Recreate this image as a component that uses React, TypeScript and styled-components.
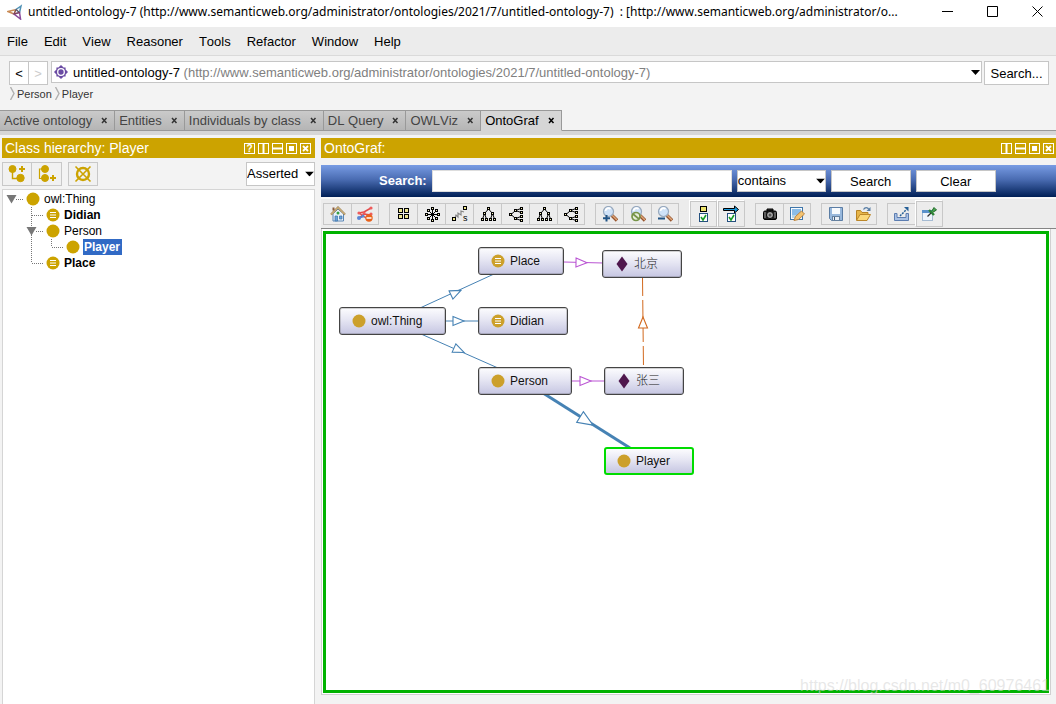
import React from "react";
import styled, { createGlobalStyle, css } from "styled-components";

const gold = "#cca300";

const GlobalStyle = createGlobalStyle`
  *, *::before, *::after { box-sizing: border-box; }
  body {
    margin: 0;
    background: #f3f3f3;
    color: #000;
    font: 13px/16px "Liberation Sans", "Noto Sans CJK SC", sans-serif;
    font-kerning: none;
  }
  button, input, select {
    font: inherit;
    font-kerning: none;
    color: inherit;
    margin: 0;
    padding: 0;
    border-radius: 0;
  }
  svg { display: block; flex: none; }
`;

/* ---------- window frame ---------- */

const Window = styled.div`
  min-height: 100vh;
  display: flex;
  flex-direction: column;
`;

const TitleBar = styled.header`
  height: 27px;
  display: flex;
  align-items: center;
  background: #fff;
  padding-left: 7px;
  padding-bottom: 4px;
`;

const Title = styled.h1`
  flex: 1;
  min-width: 0;
  margin: 0 0 0 5px;
  overflow: hidden;
  white-space: pre;
  font: 12px/20px "Noto Sans", "Noto Sans CJK SC", sans-serif;
  font-kerning: none;
`;

const WindowButton = styled.button`
  width: 45px;
  height: 23px;
  display: grid;
  align-items: center;
  justify-items: end;
  padding-right: 13px;
  border: 0;
  background: none;
`;

const MenuBar = styled.nav`
  height: 29px;
  display: flex;
  align-items: center;
  gap: 16px;
  padding: 2px 7px 0;
  background: #ececec;
  border-bottom: 1px solid #dadada;
`;

const MenuButton = styled.button`
  border: 0;
  background: none;
`;

/* ---------- location bar ---------- */

const LocationBar = styled.div`
  display: flex;
  align-items: flex-start;
  padding: 5px 7px 0 9px;
`;

const NavButton = styled.button`
  width: 20px;
  height: 24px;
  padding-top: 2px;
  border: 1px solid #c6c6c6;
  background: #fff;
  & + & { margin-left: -1px; }
  &:disabled { color: #ccc; }
`;

const OntologyBox = styled.div`
  position: relative;
  flex: 1;
  min-width: 0;
  height: 22px;
  margin: 0 2px 0 3px;
  padding: 0 1px 0 2px;
  display: flex;
  align-items: center;
  background: #fff;
  border: 1px solid #c6c6c6;
  white-space: nowrap;
`;

const OntologyName = styled.span`
  flex: 1;
  margin-left: 5px;
  padding-top: 2px;
`;

const OntologyIri = styled.span`
  color: #808080;
`;

const HiddenSelect = styled.select`
  position: absolute;
  inset: 0;
  width: 100%;
  opacity: 0;
`;

const FindButton = styled.button`
  width: 65px;
  height: 24px;
  padding-top: 2px;
  border: 1px solid #c6c6c6;
  background: #fff;
`;

const Breadcrumbs = styled.nav`
  display: flex;
  height: 17px;
  align-items: center;
  gap: 3px;
  padding-left: 10px;
  font-size: 11px;
`;

const Crumb = styled.a`
  display: flex;
  align-items: center;
  gap: 2px;
  color: #333;
  text-decoration: none;
`;

/* ---------- tabs ---------- */

const TabStrip = styled.div`
  display: flex;
  height: 25px;
  margin-top: 8px;
  border-bottom: 4px solid #d6d6d6;
`;

const TabFiller = styled.div`
  flex: 1;
  border-bottom: 1px solid #999;
`;

const Tab = styled.button<{ $active?: boolean }>`
  display: flex;
  align-items: center;
  gap: 8px;
  height: 21px;
  padding: 0 5px 0 4px;
  border: solid #999;
  border-width: 1px 1px 1px 0;
  color: #444;
  background: linear-gradient(#cacaca, #b5b5b5);
  white-space: nowrap;
  ${(p) =>
    p.$active &&
    css`
      color: #000;
      background: #d6d6d6;
      border-bottom-color: #d6d6d6;
    `}
`;

/* ---------- panels ---------- */

const Workspace = styled.main`
  flex: 1;
  display: grid;
  grid-template-columns: 313px minmax(0, 1fr);
  column-gap: 6px;
  padding: 3px 0 0 2px;
`;

const Panel = styled.section`
  display: flex;
  flex-direction: column;
  min-width: 0;
`;

const PanelHeader = styled.div<{ $end: number }>`
  height: 20px;
  display: flex;
  align-items: center;
  gap: 3px;
  padding: 0 ${(p) => p.$end}px 0 3px;
  background: ${gold};
  color: #fff;
`;

const PanelTitle = styled.h2`
  flex: 1;
  margin: 0;
  font-size: 14px;
  line-height: 20px;
  font-weight: 400;
`;

const HeaderButton = styled.button`
  width: 11px;
  height: 11px;
  display: grid;
  place-items: center;
  border: 1px solid #fff;
  background: none;
  font-size: 10px;
  line-height: 9px;
  font-weight: 700;
`;

const TreeToolbar = styled.div`
  display: flex;
  height: 24px;
  margin: 4px 0 3px;
`;

const TreeTool = styled.button`
  width: 30px;
  height: 24px;
  display: grid;
  place-items: center;
  border: 1px solid #c8c8c8;
  background: #f1f1f1;
  & + & { border-left: 0; }
  &:nth-child(3) {
    margin-left: 6px;
    border-left: 1px solid #c8c8c8;
  }
`;

const SelectFrame = styled.div<{ $width: number; $height: number }>`
  position: relative;
  width: ${(p) => p.$width}px;
  height: ${(p) => p.$height}px;
  select {
    width: 100%;
    height: 100%;
    padding-left: 0;
    appearance: none;
    background: #fff;
    border: 1px solid #c6c6c6;
  }
  svg {
    position: absolute;
    right: 1px;
    top: 50%;
    transform: translateY(-50%);
    pointer-events: none;
  }
`;

const Pusher = styled.div`
  flex: 1;
`;

const Tree = styled.div`
  flex: 1;
  padding-top: 1px;
  background: #fff;
  border: 1px solid #d5d5d5;
  border-bottom: 0;
  font-size: 12px;
`;

const TreeRow = styled.div`
  display: flex;
  height: 16px;
  align-items: center;
`;

const TreeLabel = styled.span<{ $bold?: boolean; $selected?: boolean }>`
  line-height: 16px;
  padding: 0 2px 0 1px;
  font-weight: ${(p) => (p.$bold ? 700 : 400)};
  color: ${(p) => (p.$selected ? "#fff" : "#000")};
  background: ${(p) => (p.$selected ? "#316ac5" : "transparent")};
`;

/* ---------- graph panel ---------- */

const SearchBand = styled.form`
  display: flex;
  align-items: center;
  gap: 5px;
  height: 32px;
  margin-top: 7px;
  padding-left: 58px;
  background: linear-gradient(#789ce4, #4a6cb2 45%, #001f56);
`;

const SearchLabel = styled.label`
  color: #fff;
  font-weight: 700;
`;

const SearchInput = styled.input`
  width: 300px;
  height: 22px;
  border: 1px solid #ddd;
  background: #fff;
`;

const BandButton = styled.button`
  width: 80px;
  height: 22px;
  padding-top: 1px;
  border: 1px solid #c6c6c6;
  background: #fff;
`;

const GraphToolbar = styled.div`
  display: flex;
  align-items: center;
  gap: 10px;
  height: 32px;
  padding: 0 2px;
  background: #ececec;
  border-top: 2px solid #f8f8f8;
  border-bottom: 1px solid #858585;
`;

const ToolGroup = styled.div`
  display: flex;
  align-items: center;
`;

const ToolButton = styled.button<{ $raised?: boolean }>`
  width: 28px;
  height: 22px;
  display: grid;
  place-items: center;
  background: #ececec;
  border: 1px solid #c8c8c8;
  border-right-width: 0;
  &:last-child { border-right-width: 1px; }
  ${(p) =>
    p.$raised &&
    css`
      height: 27px;
      border: 1px solid #c8c8c8;
      border-left-color: #fff;
      border-top-color: #fff;
      box-shadow: inset 1px 1px #c8c8c8;
    `}
`;

const GraphFrame = styled.div`
  flex: 1;
  display: flex;
  margin: 0 5px 9px 0;
  padding: 2px 1px 1px;
  background: #fff;
  border: 1px solid #d0d0d0;
  border-top: 0;
`;

const Canvas = styled.div`
  position: relative;
  flex: 1;
  min-height: 300px;
  background: #fff;
  border: 3px solid #00b200;
`;

const EdgeLayer = styled.svg`
  position: absolute;
  left: 0;
  top: 0;
  width: 100%;
  height: 100%;
`;

const Node = styled.div<{ $x: number; $y: number; $w: number; $selected?: boolean }>`
  position: absolute;
  left: ${(p) => p.$x}px;
  top: ${(p) => p.$y}px;
  width: ${(p) => p.$w}px;
  height: 28px;
  display: flex;
  align-items: center;
  gap: 5px;
  padding-left: ${(p) => (p.$selected ? 11 : 12)}px;
  font-size: 12px;
  color: #111;
  border: ${(p) => (p.$selected ? "2px solid #00dc00" : "1px solid #444")};
  border-radius: 3px;
  background: linear-gradient(#fcfcfe, #e6e6f3 45%, #c6c6e2);
  box-shadow: ${(p) => (p.$selected ? "none" : "inset 0 0 0 1px rgba(80, 80, 80, 0.25)")};
  &:lang(zh) {
    color: #222;
    font-weight: 300;
  }
`;

const Watermark = styled.span`
  position: absolute;
  right: -4px;
  bottom: -6px;
  font-size: 16px;
  line-height: 20px;
  color: rgba(215, 215, 215, 0.6);
  white-space: nowrap;
`;

/* ---------- drawings ---------- */

const Arrow = () => (
  <svg width="9" height="5" viewBox="0 0 9 5"><path d="M0 0h9L4.500 5z" /></svg>
);

const TabClose = ({ active }: { active?: boolean }) => (
  <svg width="9" height="9" viewBox="0 0 9 9">
    <path d="M2 2l4.500 5M6.500 2L2 7" stroke={active ? "#000" : "#333"} strokeWidth="1.500" />
  </svg>
);

const Icon = ({ children, size = 16 }: { children: React.ReactNode; size?: number }) => (
  <svg width={size} height={size} viewBox={`0 0 ${size} ${size}`} fill="none">{children}</svg>
);

const AppLogo = () => (
  <svg width="16" height="16" viewBox="0 0 16 16" fill="none">
    <path d="M1 7.500L9 5.500L7 10z" stroke="#c98b56" strokeWidth="1.500" />
    <path d="M14 2L9 5.500L12.500 8.500z" stroke="#4f91b5" strokeWidth="1.500" />
    <path d="M7 10l5.500-1.500L13.500 15z" stroke="#8a4a9b" strokeWidth="1.500" />
    <path d="M9 5.500L12.500 8.500L7 10z" stroke="#7a4750" />
  </svg>
);

const OntologyIcon = () => (
  <svg width="14" height="14" viewBox="0 0 14 14">
    <path d="M7 0l2.600 2.400h2v2L14 7l-2.400 2.600v2h-2L7 14l-2.600-2.400h-2v-2L0 7l2.400-2.600v-2h2z" fill="#6a4ba3" />
    <circle cx="7" cy="7" r="3.300" fill="#6a4ba3" stroke="#fff" strokeWidth="1.300" />
  </svg>
);

const ClassDot = ({ defined, color = gold }: { defined?: boolean; color?: string }) => (
  <svg width="14" height="14" viewBox="0 0 14 14">
    <circle cx="7" cy="7" r="6.500" fill={color} />
    {defined && <path d="M4 4.500h6M4 7h6M4 9.500h6" stroke="#fff" />}
  </svg>
);

const Diamond = () => (
  <svg width="14" height="16" viewBox="0 0 14 16"><path d="M7 .5L12.500 8L7 15.500L1.500 8z" fill="#4f174d" /></svg>
);

type CellKind = "blank" | "line" | "tee" | "elbow" | "root" | "open";

const GuideCell = ({ kind }: { kind: CellKind }) => (
  <svg width="20" height="16" viewBox="0 0 20 16">
    <g stroke="#777" strokeDasharray="1 1" shapeRendering="crispEdges">
      {(kind === "line" || kind === "tee" || kind === "open") && <path d="M8.500 0V16" />}
      {kind === "elbow" && <path d="M8.500 0V8" />}
      {(kind === "tee" || kind === "elbow") && <path d="M9 8.500H20" />}
      {(kind === "root" || kind === "open") && <path d="M13 8.500H20" />}
    </g>
    {(kind === "root" || kind === "open") && <path d="M3.500 4h10L8.500 12.500z" fill="#777" />}
  </svg>
);

const IconSlot = styled.span`
  width: 20px;
  display: flex;
  justify-content: center;
`;

const Mini = ({ at }: { at: number[][] }) => (
  <>
    {at.map(([x, y]) => (
      <rect key={`${x}-${y}`} x={x - 1} y={y - 1} width="2" height="2" fill="#f3ecb0" stroke="#000" />
    ))}
  </>
);

const Home = () => (
  <Icon>
    <path d="M3 7.500V15h10.500V7.500L8 3z" fill="#eaf2fb" stroke="#5a86b5" />
    <path d="M1 8.500L8 1.500l7 7" stroke="#9b7a48" strokeWidth="2" />
    <path d="M1 8.500L8 1.500l7 7" stroke="#ead6a0" strokeWidth="1" />
    <path d="M3.500 1.500v3" stroke="#8a5a3a" strokeWidth="2" />
    <path d="M5 10h2.500v5H5zM9.500 10H12v3H9.500z" fill="#6aa4da" stroke="#3c73a8" strokeWidth=".7" />
    <circle cx="8" cy="7" r="1.500" fill="#35a043" />
  </Icon>
);

const ClearGraph = () => (
  <Icon>
    <path d="M2 7l5-1 7-4M2 12l5-4 7 1M2 7l7 5" stroke="#e34a4a" strokeWidth="1.500" />
    <path d="M2 12l5-2" stroke="#4d75c4" strokeWidth="1.500" />
    {[[2, 7], [7, 7], [14, 2], [14, 8]].map(([x, y]) => <circle key={`${x}${y}`} cx={x} cy={y} r="1.600" fill="#ee5b5b" />)}
    <circle cx="2" cy="12" r="2" fill="#5b86d4" />
    <circle cx="6" cy="10" r="1.500" fill="#5b86d4" />
    <circle cx="12" cy="12" r="3.700" fill="#e8621b" />
    <path d="M9.500 12h5" stroke="#fff" strokeWidth="1.500" />
  </Icon>
);

const GridLayout = () => (
  <Icon>
    {[[2, 2], [8, 2], [2, 8], [8, 8]].map(([x, y]) => (
      <rect key={`${x}${y}`} x={x + 0.5} y={y + 0.5} width="4" height="4" fill="#ece58f" stroke="#000" />
    ))}
  </Icon>
);

const RadialLayout = () => (
  <Icon>
    <path d="M8.500 2v13M2 8.500h13M4 4l9 9M13 4l-9 9" stroke="#000" />
    <Mini at={[[8.5, 2.5], [8.5, 14.5], [2.5, 8.5], [14.5, 8.5], [4.5, 4.5], [12.5, 4.5], [4.5, 12.5], [12.5, 12.5]]} />
  </Icon>
);

const SpringLayout = () => (
  <svg width="18" height="16" viewBox="0 0 18 16" fill="none">
    <path d="M4 12l1-3 2 2 0-4 3 2 0-4 3 1" stroke="#888" strokeWidth="1.200" />
    <rect x="1.500" y="11.500" width="3" height="3" fill="#ece58f" stroke="#000" />
    <rect x="12.500" y=".5" width="3" height="3" fill="#ece58f" stroke="#000" />
    <text x="12" y="15" fontSize="9" fill="#000">s</text>
  </svg>
);

const TreeLayout = ({ sideways }: { sideways?: boolean }) => (
  <Icon>
    <g transform={sideways ? "matrix(0 1 1 0 0 0)" : undefined}>
      <path d="M8.500 3L4.500 7.500L2.500 13M8.500 3l4 4.500l2 5.500M4.500 7.500l2 5.500M12.500 7.500l-2 5.500" stroke="#000" />
      <Mini at={[[8.5, 2.5], [4.5, 7.5], [12.5, 7.5], [2.5, 13.5], [6.5, 13.5], [10.5, 13.5], [14.5, 13.5]]} />
    </g>
  </Icon>
);

const Magnifier = ({ mark }: { mark: "in" | "reset" | "out" }) => (
  <Icon>
    <path d="M10 9.500l5 5" stroke="#94542e" strokeWidth="3.400" />
    <path d="M10 9l5 5" stroke="#dda478" strokeWidth="1.500" />
    <circle cx="6.500" cy="5.500" r="5" fill="#cfe2f8" stroke="#98a9bd" strokeWidth="1.200" />
    <path d="M3.500 5a3 3 0 0 1 5-2" stroke="#fff" strokeWidth="1.800" />
    {mark === "in" && <path d="M4.500 9v6.500M1 12.200h7" stroke="#215486" strokeWidth="2" />}
    {mark === "out" && <path d="M1 12.500h7" stroke="#215486" strokeWidth="2" />}
    {mark === "reset" && (
      <g stroke="#769448" strokeWidth="1.700"><circle cx="6" cy="10.500" r="4" fill="#e6eddb" /><path d="M3 8l6 5" /></g>
    )}
  </Icon>
);

const TypesToggle = ({ arrow }: { arrow?: boolean }) => (
  <svg width="18" height="18" viewBox="0 0 18 18" fill="none">
    {arrow ? (
      <path d="M1.500 3.500h11V1L16.500 4.500l-4 3.500V5.500h-11z" fill="#1999dc" stroke="#000" />
    ) : (
      <rect x="6.500" y="1.500" width="6" height="5" fill="#ece36d" stroke="#000" />
    )}
    <rect x="5.500" y="8.500" width="8" height="8" fill="#fff" stroke="#24507f" />
    <path d="M7 12l2 3 3-5" stroke="#169c26" strokeWidth="1.600" />
  </svg>
);

const Camera = () => (
  <Icon>
    <path d="M5 3h6v2H5z" fill="#333" stroke="#000" />
    <rect x="1.500" y="5" width="13" height="8.500" rx="1.500" fill="#222" stroke="#000" />
    <path d="M3 6v6M13 6v6" stroke="#999" />
    <circle cx="8" cy="9" r="3.500" fill="#aaa" stroke="#000" />
    <circle cx="8" cy="9" r="1.500" fill="#555" />
  </Icon>
);

const EditImage = () => (
  <Icon>
    <rect x="1.500" y="1.500" width="12" height="12" fill="#f7fbff" stroke="#3f76aa" />
    <path d="M3 3h9v6H3z" fill="#8bbde8" /><path d="M3 9h9v3H3z" fill="#b7d5e8" />
    <path d="M5 14.500l1.500-4L12.500 5l3 3-6 5.500z" fill="#f3c371" stroke="#bd8540" />
  </Icon>
);

const Save = () => (
  <Icon>
    <path d="M1.500 1.500h13v13h-11l-2-2z" fill="#98b8dc" stroke="#5b7da4" />
    <rect x="4" y="2" width="8" height="6" fill="#f7fafd" />
    <rect x="4.500" y="10.500" width="7" height="4" fill="#e8eef5" stroke="#66819f" />
    <path d="M6.500 11v3" stroke="#3f5b7b" />
  </Icon>
);

const OpenFolder = () => (
  <Icon>
    <path d="M1.500 14V4.500h4l1.500 2h6V9" fill="#e7b64a" stroke="#b78324" />
    <path d="M1.500 14.500L5 8.500h10.500l-3.500 6z" fill="#fbd879" stroke="#bc872a" />
    <path d="M8.500 3.500C10 1 12.500 1 14 3.500" stroke="#587ea5" strokeWidth="1.300" /><path d="M15.500 1v4h-4z" fill="#587ea5" />
  </Icon>
);

const Export = () => (
  <Icon>
    <path d="M.5 7.500H3v4h9v-4h2.500v7H.5z" fill="#a9c1e4" stroke="#5c7db0" />
    <path d="M6 10l6-6" stroke="#255f96" strokeWidth="1.500" strokeDasharray="2 1" /><path d="M10 1h4.500v4.500z" fill="#255f96" />
  </Icon>
);

const Pin = () => (
  <Icon>
    <rect x="1.500" y="4.500" width="10" height="10" fill="#eef5fc" stroke="#a5bbd2" />
    <path d="M1 4h11v3H1z" fill="#5a91cb" />
    <path d="M10.500 5.500l2.500-4 2.500 2.500-4 2.500z" fill="#4ba552" stroke="#206b2a" />
    <path d="M8 4l5 5" stroke="#2c8435" strokeWidth="2.400" />
    <path d="M10 7L6.500 10.500" stroke="#333" strokeWidth="1.200" />
  </Icon>
);

const AddSubclass = () => (
  <svg width="20" height="20" viewBox="0 0 20 20" fill="none" stroke={gold}>
    <path d="M5.500 6v8.500h5" strokeWidth="1.400" />
    <circle cx="5.500" cy="5" r="3.500" fill={gold} /><circle cx="13.500" cy="14" r="3.700" fill={gold} />
    <path d="M15 2v6M12 5h6" strokeWidth="2" />
  </svg>
);

const AddSibling = () => (
  <svg width="20" height="20" viewBox="0 0 20 20" fill="none" stroke={gold}>
    <path d="M6 5H2.500v9.500h4" strokeWidth="1.200" />
    <circle cx="8" cy="5" r="3.500" fill={gold} /><circle cx="8" cy="14" r="3.500" fill={gold} />
    <path d="M16 11v6M13 14h6" strokeWidth="2" />
  </svg>
);

const DeleteClass = () => (
  <svg width="18" height="18" viewBox="0 0 18 18" fill="none" stroke={gold} strokeWidth="1.600">
    <circle cx="9" cy="9" r="6" strokeWidth="2.400" /><path d="M1.500 1.500l15 15M16.500 1.500l-15 15" />
  </svg>
);

const PanelControls = () => (
  <>
    <HeaderButton aria-label="Split vertically"><svg width="9" height="9" viewBox="0 0 9 9"><path d="M3.500 0h2v9h-2z" fill="#fff" /></svg></HeaderButton>
    <HeaderButton aria-label="Split horizontally"><svg width="9" height="9" viewBox="0 0 9 9"><path d="M0 3.500h9v2H0z" fill="#fff" /></svg></HeaderButton>
    <HeaderButton aria-label="Float"><svg width="9" height="9" viewBox="0 0 9 9"><path d="M2 2h5v5H2z" fill="#fff" /></svg></HeaderButton>
    <HeaderButton aria-label="Close"><svg width="9" height="9" viewBox="0 0 9 9"><path d="M2 2l5 5M7 2L2 7" stroke="#fff" strokeWidth="1.800" /></svg></HeaderButton>
  </>
);

const ArrowHead = ({ x, y, angle, color, scale = 1 }: { x: number; y: number; angle: number; color: string; scale?: number }) => (
  <path
    d="M0 -4.500L11 0L0 4.500z"
    fill="#fff"
    stroke={color}
    strokeWidth={1.1 / scale}
    transform={`translate(${x} ${y}) rotate(${angle}) scale(${scale})`}
  />
);

/* ---------- data ---------- */

const tabs = ["Active ontology", "Entities", "Individuals by class", "DL Query", "OWLViz", "OntoGraf"];

const tree: { name: string; cells: CellKind[]; defined?: boolean; bold?: boolean; selected?: boolean }[] = [
  { name: "owl:Thing", cells: ["root"] },
  { name: "Didian", cells: ["blank", "tee"], defined: true, bold: true },
  { name: "Person", cells: ["blank", "open"] },
  { name: "Player", cells: ["blank", "line", "elbow"], bold: true, selected: true },
  { name: "Place", cells: ["blank", "elbow"], defined: true, bold: true },
];

const nodes: { name: string; x: number; y: number; w: number; kind: "class" | "defined" | "individual"; selected?: boolean }[] = [
  { name: "owl:Thing", x: 13, y: 73, w: 107, kind: "class" },
  { name: "Place", x: 152, y: 13, w: 86, kind: "defined" },
  { name: "Didian", x: 152, y: 73, w: 90, kind: "defined" },
  { name: "Person", x: 152, y: 133, w: 94, kind: "class" },
  { name: "北京", x: 276, y: 16, w: 80, kind: "individual" },
  { name: "张三", x: 278, y: 133, w: 80, kind: "individual" },
  { name: "Player", x: 278, y: 213, w: 90, kind: "class", selected: true },
];

const toolGroups: { label: string; icon: React.ReactNode; raised?: boolean }[][] = [
  [{ label: "Home", icon: <Home /> }, { label: "Clear graph", icon: <ClearGraph /> }],
  [
    { label: "Grid", icon: <GridLayout /> },
    { label: "Radial", icon: <RadialLayout /> },
    { label: "Spring", icon: <SpringLayout /> },
    { label: "Tree vertical", icon: <TreeLayout /> },
    { label: "Tree horizontal", icon: <TreeLayout sideways /> },
    { label: "Vertical directed", icon: <TreeLayout /> },
    { label: "Horizontal directed", icon: <TreeLayout sideways /> },
  ],
  [
    { label: "Zoom in", icon: <Magnifier mark="in" /> },
    { label: "No zoom", icon: <Magnifier mark="reset" /> },
    { label: "Zoom out", icon: <Magnifier mark="out" /> },
  ],
  [{ label: "Node types", icon: <TypesToggle />, raised: true }, { label: "Arc types", icon: <TypesToggle arrow />, raised: true }],
  [{ label: "Snapshot", icon: <Camera /> }, { label: "Configure tooltips", icon: <EditImage /> }],
  [{ label: "Save graph", icon: <Save /> }, { label: "Open graph", icon: <OpenFolder /> }],
  [{ label: "Export", icon: <Export /> }, { label: "Pin tooltips", icon: <Pin />, raised: true }],
];

export default function App() {
  return (
    <Window>
      <GlobalStyle />
      <TitleBar>
        <AppLogo />
        <Title>{"untitled-ontology-7 (http://www.semanticweb.org/administrator/ontologies/2021/7/untitled-ontology-7)  : [http://www.semanticweb.org/administrator/o..."}</Title>
        <WindowButton aria-label="Minimize"><svg width="11" height="11"><path d="M0 5.500h11" stroke="#000" /></svg></WindowButton>
        <WindowButton aria-label="Maximize"><svg width="11" height="11"><path d="M.5 .5h10v10H.5z" fill="none" stroke="#000" /></svg></WindowButton>
        <WindowButton aria-label="Close window"><svg width="11" height="11"><path d="M.5 .5l10 10M10.500 .5l-10 10" stroke="#000" /></svg></WindowButton>
      </TitleBar>
      <MenuBar>
        {["File", "Edit", "View", "Reasoner", "Tools", "Refactor", "Window", "Help"].map((m) => (
          <MenuButton key={m}>{m}</MenuButton>
        ))}
      </MenuBar>
      <LocationBar>
        <NavButton aria-label="Back">&lt;</NavButton>
        <NavButton aria-label="Forward" disabled>&gt;</NavButton>
        <OntologyBox>
          <OntologyIcon />
          <OntologyName>
            untitled-ontology-7 <OntologyIri>(http://www.semanticweb.org/administrator/ontologies/2021/7/untitled-ontology-7)</OntologyIri>
          </OntologyName>
          <Arrow />
          <HiddenSelect aria-label="Active ontology"><option>untitled-ontology-7</option></HiddenSelect>
        </OntologyBox>
        <FindButton>Search...</FindButton>
      </LocationBar>
      <Breadcrumbs>
        {["Person", "Player"].map((c) => (
          <Crumb key={c} href="#">
            <svg width="5" height="13"><path d="M.5 0l3.500 6.500L.5 13" fill="none" stroke="#b0b0b0" strokeWidth="1.400" /></svg>
            {c}
          </Crumb>
        ))}
      </Breadcrumbs>
      <TabStrip>
        {tabs.map((t) => (
          <Tab key={t} $active={t === "OntoGraf"}>{t}<TabClose active={t === "OntoGraf"} /></Tab>
        ))}
        <TabFiller />
      </TabStrip>
      <Workspace>
        <Panel>
          <PanelHeader $end={4}>
            <PanelTitle>Class hierarchy: Player</PanelTitle>
            <HeaderButton aria-label="Help">?</HeaderButton>
            <PanelControls />
          </PanelHeader>
          <TreeToolbar>
            <TreeTool aria-label="Add subclass"><AddSubclass /></TreeTool>
            <TreeTool aria-label="Add sibling class"><AddSibling /></TreeTool>
            <TreeTool aria-label="Delete class"><DeleteClass /></TreeTool>
            <Pusher />
            <SelectFrame $width={69} $height={24}>
              <select aria-label="Hierarchy"><option>Asserted</option></select>
              <Arrow />
            </SelectFrame>
          </TreeToolbar>
          <Tree role="tree">
            {tree.map((r) => (
              <TreeRow key={r.name} role="treeitem" aria-selected={!!r.selected}>
                {r.cells.map((c, i) => <GuideCell key={i} kind={c} />)}
                <IconSlot><ClassDot defined={r.defined} /></IconSlot>
                <TreeLabel $bold={r.bold} $selected={r.selected}>{r.name}</TreeLabel>
              </TreeRow>
            ))}
          </Tree>
        </Panel>
        <Panel>
          <PanelHeader $end={2}>
            <PanelTitle>OntoGraf:</PanelTitle>
            <PanelControls />
          </PanelHeader>
          <SearchBand onSubmit={(e) => e.preventDefault()}>
            <SearchLabel htmlFor="graph-search">Search:</SearchLabel>
            <SearchInput id="graph-search" type="text" />
            <SelectFrame $width={89} $height={22}>
              <select aria-label="Match mode"><option>contains</option></select>
              <Arrow />
            </SelectFrame>
            <BandButton type="submit">Search</BandButton>
            <BandButton type="reset">Clear</BandButton>
          </SearchBand>
          <GraphToolbar>
            {toolGroups.map((g, i) => (
              <ToolGroup key={i}>
                {g.map((t) => (
                  <ToolButton key={t.label} aria-label={t.label} $raised={t.raised}>{t.icon}</ToolButton>
                ))}
              </ToolGroup>
            ))}
          </GraphToolbar>
          <GraphFrame>
            <Canvas>
              <EdgeLayer fill="none">
                <g stroke="#4682b4">
                  <path d="M94 74L168 40M119 87H153M95 100L172 134" />
                  <path d="M217 159L304 214" strokeWidth="3" />
                </g>
                <path d="M238 28L277 29M246 147H279" stroke="#ba55d3" />
                <path d="M316.500 43L317.500 134" stroke="#d2691e" strokeDasharray="19 4" />
                <ArrowHead x={125} y={61} angle={-25} color="#4682b4" />
                <ArrowHead x={127} y={87} angle={0} color="#4682b4" />
                <ArrowHead x={128} y={114} angle={24} color="#4682b4" />
                <ArrowHead x={254} y={183} angle={32} color="#4682b4" scale={1.4} />
                <ArrowHead x={250} y={28.5} angle={1} color="#ba55d3" />
                <ArrowHead x={254} y={147} angle={0} color="#ba55d3" />
                <ArrowHead x={317} y={94} angle={-90} color="#d2691e" />
              </EdgeLayer>
              {nodes.map((n) => (
                <Node key={n.name} lang={n.kind === "individual" ? "zh" : "en"} $x={n.x} $y={n.y} $w={n.w} $selected={n.selected}>
                  {n.kind === "individual" ? <Diamond /> : <ClassDot color="#cca02b" defined={n.kind === "defined"} />}
                  {n.name}
                </Node>
              ))}
              <Watermark>https://blog.csdn.net/m0_60976461</Watermark>
            </Canvas>
          </GraphFrame>
        </Panel>
      </Workspace>
    </Window>
  );
}
